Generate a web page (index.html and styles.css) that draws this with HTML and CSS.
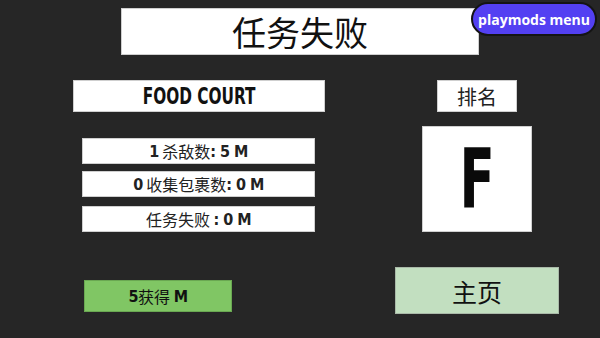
FILE: index.html
```html
<!DOCTYPE html>
<html lang="zh-CN">
<head>
  <meta charset="UTF-8">
  <title>任务失败</title>
  <link rel="stylesheet" href="styles.css">
</head>
<body>
  <div class="screen">
    <div class="title">任务失败</div>

    <div class="main">
      <div class="left">
        <div class="level"><span class="level-text">FOOD COURT</span></div>
        <div class="stats">
          <div class="stat"><span class="num">1</span> 杀敌数<span class="num">: 5 M</span></div>
          <div class="stat"><span class="num">0</span> 收集包裹数<span class="num">: 0 M</span></div>
          <div class="stat stat-last">任务失败 <span class="num">: 0 M</span></div>
        </div>
        <div class="reward"><span class="num">5</span>获得 <span class="num">M</span></div>
      </div>

      <div class="right">
        <div class="rank-label">排名</div>
        <div class="rank"><span class="grade">F</span></div>
        <button class="home">主页</button>
      </div>
    </div>

    <div class="menu-pill">playmods menu</div>
  </div>
</body>
</html>
```

FILE: styles.css
```css
body {
  margin: 0;
  background-color: #262626;
  font-family: "Noto Sans CJK SC", "Noto Sans", sans-serif;
}
.screen {
  position: relative;
  width: 600px;
  height: 338px;
  padding-top: 8px;
  box-sizing: border-box;
  background-color: #262626;
  overflow: hidden;
}
.title {
  width: 358px;
  height: 47px;
  margin: 0 auto 0 121px;
  background: #fff;
  border: 1px solid #cfcfcf;
  box-sizing: border-box;
  display: flex;
  align-items: center;
  justify-content: center;
  font-size: 34px;
  color: #111;
}
.main {
  display: flex;
  margin-top: 25px;
}
.left {
  margin-left: 73px;
  width: 252px;
  display: flex;
  flex-direction: column;
}
.num {
  font-family: "DejaVu Sans Condensed", sans-serif;
  font-weight: bold;
  letter-spacing: -0.5px;
}
.level {
  height: 32px;
  background: #fff;
  border: 1px solid #cfcfcf;
  box-sizing: border-box;
  display: flex;
  align-items: center;
  justify-content: center;
  font-family: "DejaVu Sans Condensed", sans-serif;
  font-weight: bold;
  font-size: 23px;
  color: #111;
}
.level-text {
  display: inline-block;
  transform: scaleX(0.74);
  white-space: nowrap;
}
.stats {
  margin: 26px 10px 0 9px;
  display: flex;
  flex-direction: column;
  gap: 7px;
}
.stat {
  height: 26px;
  background: #fff;
  border: 1px solid #cfcfcf;
  box-sizing: border-box;
  display: flex;
  align-items: center;
  justify-content: center;
  white-space: pre;
  font-size: 16px;
  color: #222;
}
.stat-last {
  margin-top: 2px;
}
.reward {
  margin: 48px 0 0 11px;
  width: 148px;
  height: 32px;
  background: #80c664;
  border: 1px solid #6aa852;
  box-sizing: border-box;
  display: flex;
  align-items: center;
  justify-content: center;
  white-space: pre;
  font-size: 16px;
  color: #111;
}
.right {
  margin-left: 70px;
  width: 164px;
  display: flex;
  flex-direction: column;
  align-items: center;
}
.rank-label {
  width: 80px;
  height: 32px;
  background: #fff;
  border: 1px solid #cfcfcf;
  box-sizing: border-box;
  display: flex;
  align-items: center;
  justify-content: center;
  font-size: 20px;
  color: #222;
}
.rank {
  margin-top: 14px;
  width: 110px;
  height: 106px;
  background: #fff;
  border: 1px solid #cfcfcf;
  box-sizing: border-box;
  display: flex;
  align-items: center;
  justify-content: center;
}
.grade {
  font-family: "DejaVu Sans Condensed", sans-serif;
  font-weight: bold;
  font-size: 82px;
  line-height: 1;
  color: #0a0a0a;
  transform: scaleX(0.7);
}
.home {
  margin-top: 35px;
  width: 164px;
  height: 47px;
  background: #c2dfc0;
  border: 1px solid #a9b9a8;
  font-family: "Noto Sans CJK SC", sans-serif;
  font-size: 25px;
  color: #111;
  cursor: pointer;
}
.menu-pill {
  position: absolute;
  top: 2px;
  left: 471px;
  width: 126px;
  height: 34px;
  box-sizing: border-box;
  border: 2px solid #141414;
  border-radius: 17px;
  background: #5340f2;
  color: #fff;
  font-family: "Open Sans", sans-serif;
  font-weight: bold;
  font-size: 14px;
  display: flex;
  align-items: center;
  justify-content: center;
}
```
